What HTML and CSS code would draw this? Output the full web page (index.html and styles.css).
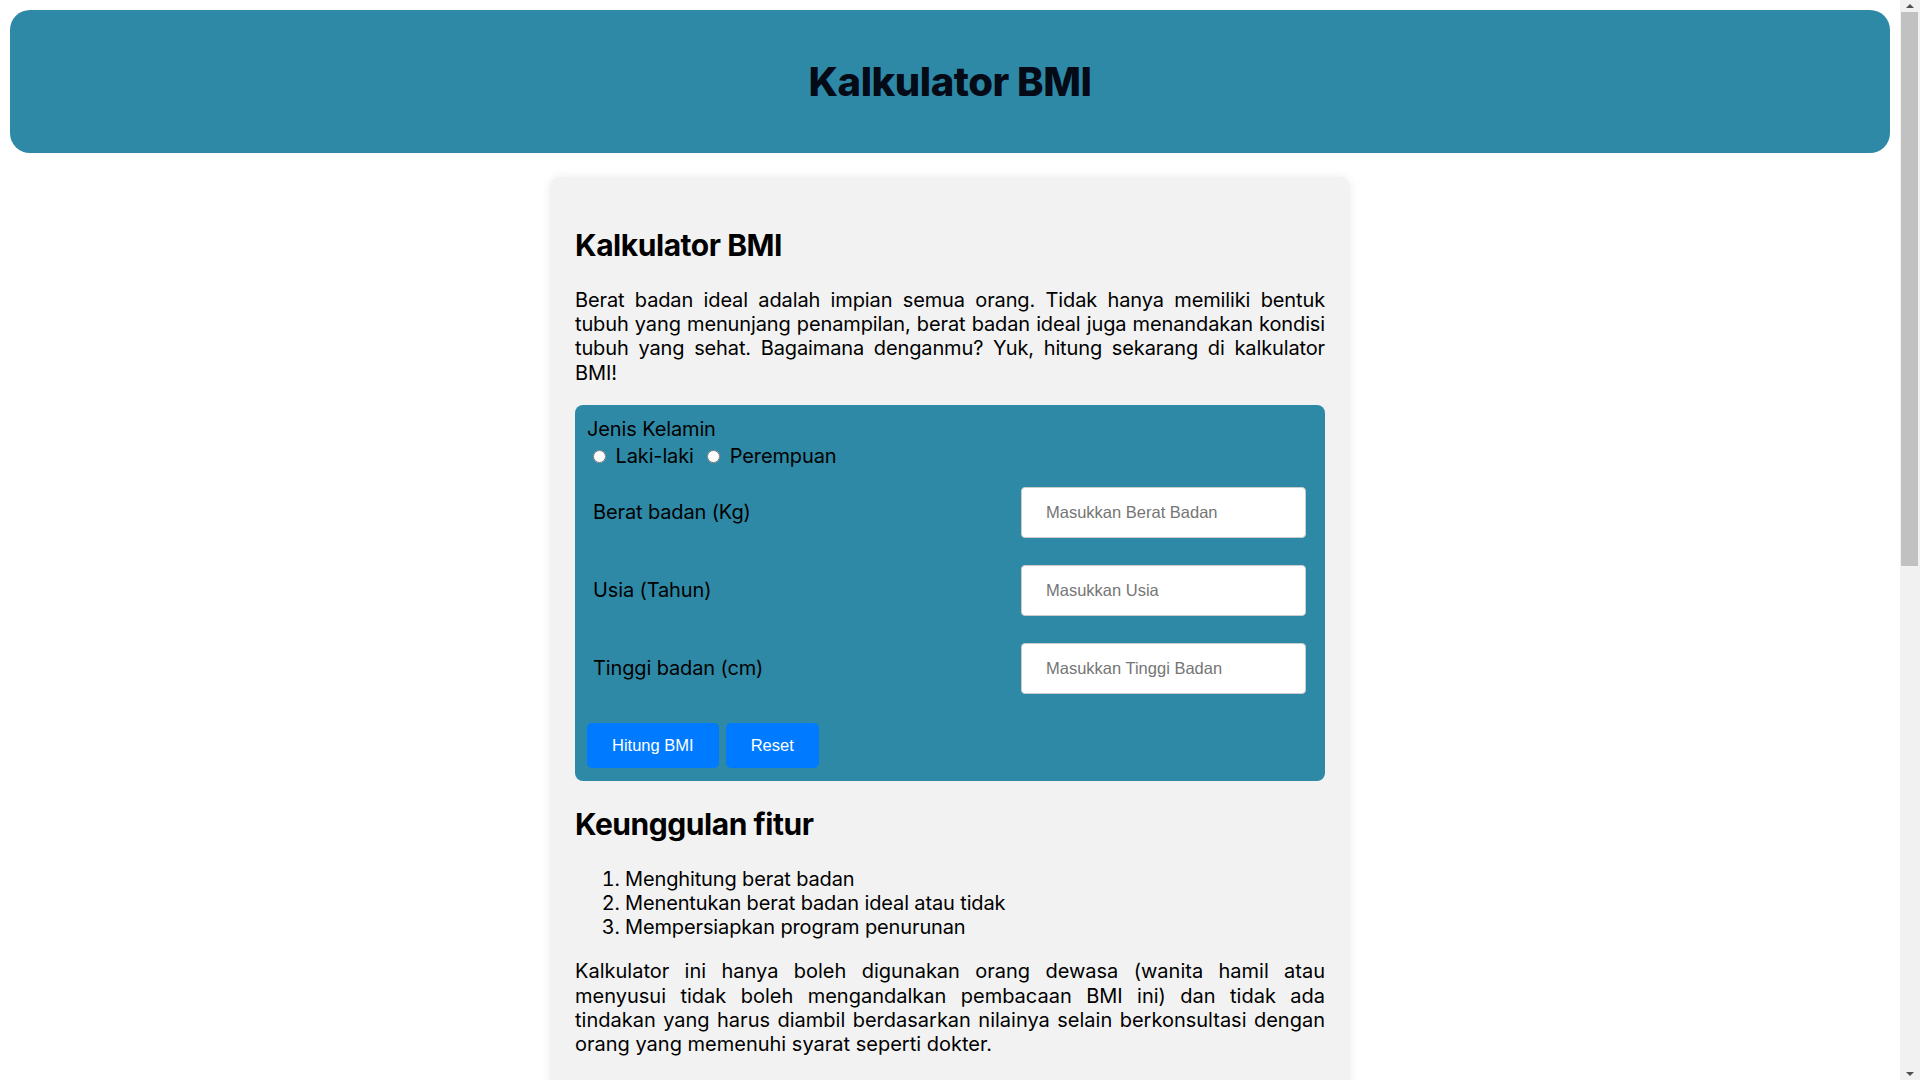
FILE: index.html
```html
<!DOCTYPE html>
<html lang="id">
<head>
<meta charset="utf-8">
<title>Kalkulator BMI</title>
<link rel="stylesheet" href="styles.css">
</head>
<body>
<header class="site-header">
  <h1 class="site-title">Kalkulator BMI</h1>
</header>

<main class="card">
  <h2 class="section-title">Kalkulator BMI</h2>
  <p class="text">Berat badan ideal adalah impian semua orang. Tidak hanya memiliki bentuk tubuh yang menunjang penampilan, berat badan ideal juga menandakan kondisi tubuh yang sehat. Bagaimana denganmu? Yuk, hitung sekarang di kalkulator BMI!</p>

  <form class="bmi-form">
    <div class="gender">
      <span class="gender-label">Jenis Kelamin</span>
      <div class="gender-options">
        <input type="radio" name="gender" id="male"> <label for="male">Laki-laki</label>
        <input type="radio" name="gender" id="female"> <label for="female">Perempuan</label>
      </div>
    </div>
    <div class="fields">
      <div class="field-row">
        <label class="field-label" for="berat">Berat badan (Kg)</label>
        <input class="field-input" type="text" id="berat" placeholder="Masukkan Berat Badan">
      </div>
      <div class="field-row">
        <label class="field-label" for="usia">Usia (Tahun)</label>
        <input class="field-input" type="text" id="usia" placeholder="Masukkan Usia">
      </div>
      <div class="field-row">
        <label class="field-label" for="tinggi">Tinggi badan (cm)</label>
        <input class="field-input" type="text" id="tinggi" placeholder="Masukkan Tinggi Badan">
      </div>
    </div>
    <div class="actions">
      <button type="button" class="btn">Hitung BMI</button>
      <button type="reset" class="btn">Reset</button>
    </div>
  </form>

  <h2 class="section-title">Keunggulan fitur</h2>
  <ol class="feature-list">
    <li>Menghitung berat badan</li>
    <li>Menentukan berat badan ideal atau tidak</li>
    <li>Mempersiapkan program penurunan</li>
  </ol>

  <p class="text text-wide">Kalkulator ini hanya boleh digunakan orang dewasa (wanita hamil atau menyusui tidak boleh mengandalkan pembacaan BMI ini) dan tidak ada tindakan yang harus diambil berdasarkan nilainya selain berkonsultasi dengan orang yang memenuhi syarat seperti dokter.</p>

  <p class="text text-wide text-close">Kalkulator ini juga membantu Anda untuk mengetahui apakah berat badan Anda sudah ideal atau belum, sehingga Anda dapat menentukan langkah selanjutnya untuk menjaga kesehatan tubuh Anda.</p>

  <h2 class="section-title">Kategori BMI</h2>
  <ol class="feature-list">
    <li>Kurang dari 18,5: Berat badan kurang</li>
    <li>18,5 sampai 24,9: Berat badan normal</li>
    <li>25 sampai 29,9: Berat badan berlebih</li>
    <li>30 atau lebih: Obesitas</li>
  </ol>

  <p class="text">Nilai BMI dihitung dengan membagi berat badan dalam kilogram dengan kuadrat tinggi badan dalam meter. Hasil perhitungan ini hanya merupakan perkiraan dan tidak menggambarkan komposisi tubuh secara lengkap.</p>

  <h2 class="section-title">Hasil</h2>
  <div class="result-box">
    <p class="result-text">Hasil perhitungan BMI Anda akan muncul di sini.</p>
  </div>

  <p class="text">Pastikan data yang Anda masukkan sudah benar agar hasil perhitungan yang diperoleh lebih akurat.</p>

  <p class="text">Menjaga berat badan ideal dapat dilakukan dengan menerapkan pola makan sehat, rutin berolahraga, cukup istirahat, serta mengelola stres dengan baik setiap harinya.</p>

  <h2 class="section-title">Tips</h2>
  <p class="text">Konsumsi makanan bergizi seimbang, perbanyak sayur dan buah, kurangi makanan tinggi gula dan lemak, serta lakukan aktivitas fisik minimal 30 menit setiap hari.</p>
</main>

<div class="scrollbar" aria-hidden="true">
  <div class="scroll-arrow scroll-arrow-up"></div>
  <div class="scroll-track">
    <div class="scroll-thumb"></div>
  </div>
  <div class="scroll-arrow scroll-arrow-down"></div>
</div>
</body>
</html>
```

FILE: styles.css
```css
html {
  background: #ffffff;
}

body {
  margin: 10px 30px 10px 10px;
  font-family: Inter, "Noto Sans", sans-serif;
  font-size: 20px;
  letter-spacing: -0.13px;
  color: #000000;
}

.site-header {
  background: #2e89a6;
  border-radius: 20px;
  height: 143px;
  display: flex;
  align-items: center;
  justify-content: center;
}

.site-title {
  margin: 0;
  font-size: 40px;
  line-height: 48px;
  font-weight: 800;
  letter-spacing: -0.45px;
  color: #040a16;
}

.card {
  width: 800px;
  box-sizing: border-box;
  margin: 24px auto 0;
  padding: 25px;
  background: #f2f2f2;
  border-radius: 10px;
  box-shadow: 0 0 10px rgba(0, 0, 0, 0.08);
}

.section-title {
  font-size: 30px;
  font-weight: 700;
  line-height: 36px;
  letter-spacing: -0.45px;
  margin: 25px 0;
}

.text {
  margin: 20px 0;
  line-height: 24.2px;
  text-align: justify;
}

.text-wide {
  letter-spacing: 0;
}

.text-close {
  margin-top: 13px;
}

.bmi-form {
  background: #2e89a6;
  border-radius: 8px;
  padding: 12px 12px 13px;
  margin: 20px 0;
}

.gender-label {
  display: block;
  line-height: 24px;
}

.gender-options {
  line-height: 26px;
  margin-top: 2px;
}

.gender-options input {
  margin: 3px 4px 0 6px;
}

.gender-options label {
  margin-right: 2px;
}

.fields {
  display: flex;
  flex-direction: column;
  gap: 27px;
  margin-top: 18px;
}

.field-row {
  display: flex;
  align-items: center;
  justify-content: space-between;
  padding: 0 7px 0 6px;
}

.field-input {
  box-sizing: border-box;
  width: 285px;
  height: 51px;
  padding: 0 24px;
  border: 1px solid #cccccc;
  border-radius: 4px;
  background: #ffffff;
  font-family: "Liberation Sans", Arial, sans-serif;
  font-size: 16.5px;
  letter-spacing: 0;
  color: #000000;
}

.field-input::placeholder {
  color: #757575;
}

.actions {
  display: flex;
  gap: 7px;
  margin-top: 29px;
}

.btn {
  height: 45px;
  padding: 0 25px;
  border: none;
  border-radius: 5px;
  background: #007bff;
  color: #ffffff;
  font-family: "Liberation Sans", Arial, sans-serif;
  font-size: 16.5px;
  letter-spacing: 0;
}

.feature-list {
  margin: 25px 0 20px;
  padding-left: 50px;
  line-height: 24.2px;
}

.result-box {
  background: #2e89a6;
  border-radius: 8px;
  padding: 12px;
  min-height: 176px;
  margin: 20px 0;
}

.result-text {
  margin: 0;
  line-height: 24px;
}

.scrollbar {
  position: fixed;
  top: 0;
  right: 0;
  width: 20px;
  height: 100vh;
  background: #f1f1f1;
  display: flex;
  flex-direction: column;
}

.scroll-arrow {
  height: 12px;
  flex: none;
  display: flex;
  align-items: center;
  justify-content: center;
}

.scroll-arrow::before {
  content: "";
  width: 0;
  height: 0;
  border-left: 4px solid transparent;
  border-right: 4px solid transparent;
}

.scroll-arrow-up::before {
  border-bottom: 4px solid #505050;
}

.scroll-arrow-down::before {
  border-top: 4px solid #505050;
}

.scroll-track {
  flex: 1;
}

.scroll-thumb {
  height: 554px;
  margin: 0 2px 0 1px;
  background: #c1c1c1;
}
```
